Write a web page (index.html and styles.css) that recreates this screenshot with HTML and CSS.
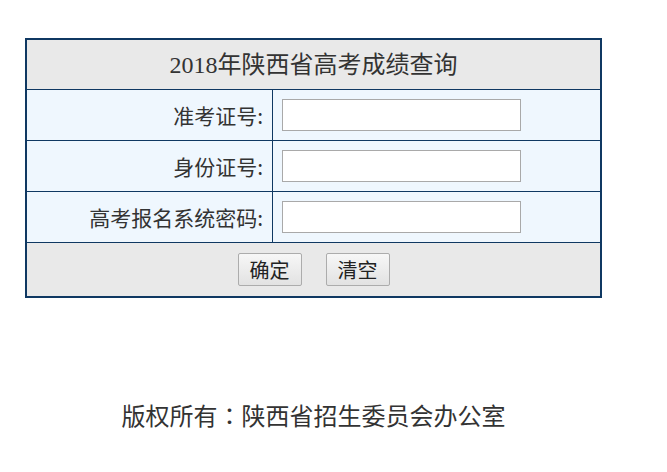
FILE: index.html
```html
<!DOCTYPE html>
<html lang="zh-CN">
<head>
<meta charset="utf-8">
<title>2018年陕西省高考成绩查询</title>
<link rel="stylesheet" href="styles.css">
</head>
<body>
<div class="page">
  <form class="panel">
    <div class="head">2018年陕西省高考成绩查询</div>
    <div class="row">
      <label class="label">准考证号:</label>
      <div class="field"><input class="input" type="text"></div>
    </div>
    <div class="row">
      <label class="label">身份证号:</label>
      <div class="field"><input class="input" type="text"></div>
    </div>
    <div class="row">
      <label class="label">高考报名系统密码:</label>
      <div class="field"><input class="input" type="password"></div>
    </div>
    <div class="actions">
      <button class="btn" type="button">确定</button>
      <button class="btn" type="reset">清空</button>
    </div>
  </form>
  <div class="footer">版权所有<span class="colon" lang="zh-TW">：</span>陕西省招生委员会办公室</div>
</div>
</body>
</html>
```

FILE: styles.css
```css
html, body {
  margin: 0;
  padding: 0;
  background: #ffffff;
}

body {
  font-family: "Noto Sans CJK SC", "Noto Sans", sans-serif;
  color: #333333;
}

.page {
  width: 577px;
  margin-left: 25px;
  padding-top: 38px;
}

.panel {
  box-sizing: border-box;
  width: 577px;
  border: 2px solid #0f3862;
  margin: 0;
}

.head {
  height: 49px;
  background: #e9e9e9;
  border-bottom: 1px solid #0f3862;
  font-family: "Liberation Serif", "Noto Sans CJK SC", serif;
  font-size: 24px;
  line-height: 51px;
  text-align: center;
  color: #333333;
}

.row {
  display: grid;
  grid-template-columns: 246px 1fr;
  height: 50px;
  background: #eff7fe;
  border-bottom: 1px solid #0f3862;
}

.label {
  box-sizing: border-box;
  border-right: 1px solid #0f3862;
  padding-right: 9px;
  text-align: right;
  font-size: 21px;
  line-height: 50px;
  color: #333333;
}

.field {
  display: flex;
  align-items: center;
  padding-left: 9px;
}

.input {
  box-sizing: border-box;
  width: 239px;
  height: 32px;
  margin: 0;
  border: 1px solid #a9a9a9;
  background: #ffffff;
  padding: 2px 4px;
}

.actions {
  display: flex;
  justify-content: center;
  align-items: center;
  gap: 24px;
  height: 53px;
  background: #e9e9e9;
}

.btn {
  box-sizing: border-box;
  width: 64px;
  height: 33px;
  margin: 0;
  padding: 0;
  border: 1px solid #acacac;
  border-radius: 2px;
  background: linear-gradient(#f7f7f7, #e2e2e2);
  font-family: "Noto Sans CJK SC", sans-serif;
  font-size: 20px;
  line-height: 31px;
  color: #222222;
}

.footer {
  margin-top: 102px;
  text-align: center;
  font-size: 24px;
  line-height: 30px;
  color: #333333;
}

.colon {
  font-family: "Noto Sans CJK TC", "Noto Sans CJK SC", sans-serif;
}
```
